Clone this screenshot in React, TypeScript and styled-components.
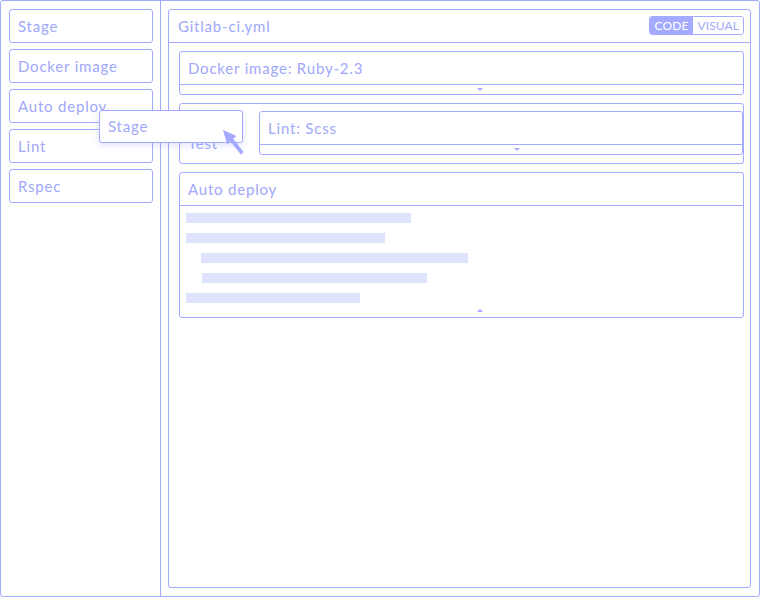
import React from "react";
import styled, { createGlobalStyle } from "styled-components";

const LINE = "#a3aaff";
const TEXT = "#a0a8fb";
const BAR = "#e0e3fd";

const Global = createGlobalStyle`
  html, body { margin: 0; padding: 0; background: #fff; }
  body { font-family: Lato, "Open Sans", sans-serif; }
  * { box-sizing: border-box; }
`;

const Frame = styled.div`
  position: relative;
  width: 760px;
  height: 597px;
  border: 1px solid ${LINE};
  border-radius: 3px;
  display: flex;
  background: #fff;
  overflow: hidden;
`;

const Sidebar = styled.aside`
  width: 160px;
  flex: none;
  border-right: 1px solid ${LINE};
  padding: 8px 0 0 8px;
  display: flex;
  flex-direction: column;
  gap: 6px;
`;

const Tile = styled.div`
  width: 144px;
  height: 34px;
  border: 1px solid ${LINE};
  border-radius: 3px;
  padding: 0 0 1px 8px;
  display: flex;
  align-items: center;
  font-size: 15px;
  letter-spacing: 0.8px;
  color: ${TEXT};
  background: #fff;
  white-space: nowrap;
  overflow: hidden;
`;

const Ghost = styled(Tile)`
  position: absolute;
  left: 98px;
  top: 109px;
  height: 33px;
  box-shadow: 0 2px 6px rgba(140, 150, 255, 0.28);
  z-index: 2;
`;

const Cursor = styled.svg`
  position: absolute;
  left: 220px;
  top: 127px;
  z-index: 3;
`;

const Main = styled.main`
  flex: 1;
  padding: 8px 8px 8px 7px;
  display: flex;
`;

const Panel = styled.section`
  flex: 1;
  border: 1px solid ${LINE};
  border-radius: 3px;
  display: flex;
  flex-direction: column;
`;

const PanelHeader = styled.header`
  height: 33px;
  border-bottom: 1px solid ${LINE};
  padding: 0 6px 1px 9px;
  display: flex;
  align-items: center;
  justify-content: space-between;
  font-size: 15px;
  letter-spacing: 0.8px;
  color: ${TEXT};
`;

const Toggle = styled.div`
  display: flex;
  height: 19px;
  border: 1px solid ${LINE};
  border-radius: 3px;
  overflow: hidden;
  letter-spacing: 0.1px;
`;

const ToggleOption = styled.span<{ $active?: boolean }>`
  display: flex;
  align-items: center;
  padding: 0 ${(p) => (p.$active ? "5px" : "4px")};
  font-size: 12px;
  background: ${(p) => (p.$active ? LINE : "#fff")};
  color: ${(p) => (p.$active ? "#fff" : TEXT)};
`;

const Body = styled.div`
  padding: 8px 6px 0 10px;
  display: flex;
  flex-direction: column;
  gap: 8px;
`;

const Card = styled.div`
  border: 1px solid ${LINE};
  border-radius: 3px;
  display: flex;
  flex-direction: column;
  background: #fff;
`;

const CardHeader = styled.div`
  height: 33px;
  border-bottom: 1px solid ${LINE};
  padding: 0 0 1px 8px;
  display: flex;
  align-items: center;
  font-size: 15px;
  letter-spacing: 0.8px;
  color: ${TEXT};
  white-space: nowrap;
`;

const Strip = styled.div<{ $up?: boolean }>`
  height: ${(p) => (p.$up ? "14px" : "9px")};
  padding-left: 52.8%;
  display: flex;
  align-items: ${(p) => (p.$up ? "flex-end" : "center")};
  padding-bottom: ${(p) => (p.$up ? "5px" : "0")};
`;

const Arrow = styled.span<{ $up?: boolean }>`
  width: 0;
  height: 0;
  border-left: 3px solid transparent;
  border-right: 3px solid transparent;
  ${(p) =>
    p.$up
      ? `border-bottom: 3px solid ${LINE};`
      : `border-top: 3px solid ${LINE};`}
`;

const StageCard = styled(Card)`
  flex-direction: row;
  align-items: flex-start;
  padding: 7px 0 8px 0;
`;

const StageLabel = styled.div`
  width: 79px;
  flex: none;
  padding: 2px 8px 0 8px;
  font-size: 15px;
  line-height: 20px;
  letter-spacing: 0.8px;
  color: ${TEXT};
`;

const JobCard = styled(Card)`
  flex: 1;
`;

const Code = styled.div`
  padding: 7px 6px 0 6px;
  display: flex;
  flex-direction: column;
  gap: 10px;
`;

const CodeBar = styled.div<{ $indent?: number }>`
  height: 10px;
  margin-left: ${(p) => p.$indent ?? 0}px;
  background: ${BAR};
`;

const bars = [
  { w: 225, i: 0 },
  { w: 199, i: 0 },
  { w: 267, i: 15 },
  { w: 225, i: 16 },
  { w: 174, i: 0 },
];

export default function App() {
  return (
    <>
      <Global />
      <Frame>
        <Sidebar>
          <Tile>Stage</Tile>
          <Tile>Docker image</Tile>
          <Tile>Auto deploy</Tile>
          <Tile>Lint</Tile>
          <Tile>Rspec</Tile>
        </Sidebar>
        <Main>
          <Panel>
            <PanelHeader>
              <span>Gitlab-ci.yml</span>
              <Toggle>
                <ToggleOption $active>CODE</ToggleOption>
                <ToggleOption>VISUAL</ToggleOption>
              </Toggle>
            </PanelHeader>
            <Body>
              <Card>
                <CardHeader>Docker image: Ruby-2.3</CardHeader>
                <Strip>
                  <Arrow />
                </Strip>
              </Card>
              <StageCard>
                <StageLabel>Stage: Test</StageLabel>
                <JobCard>
                  <CardHeader>Lint: Scss</CardHeader>
                  <Strip>
                    <Arrow />
                  </Strip>
                </JobCard>
              </StageCard>
              <Card>
                <CardHeader>Auto deploy</CardHeader>
                <Code>
                  {bars.map((b, k) => (
                    <CodeBar key={k} $indent={b.i} style={{ width: b.w }} />
                  ))}
                </Code>
                <Strip $up>
                  <Arrow $up />
                </Strip>
              </Card>
            </Body>
          </Panel>
        </Main>
        <Ghost>Stage</Ghost>
        <Cursor width="28" height="32" viewBox="0 0 28 32">
          <polygon
            points="2,2 15.5,8 12.2,10.8 22.6,24 19.8,26.4 9.4,13.4 6.2,16.6"
            fill={LINE}
          />
        </Cursor>
      </Frame>
    </>
  );
}
